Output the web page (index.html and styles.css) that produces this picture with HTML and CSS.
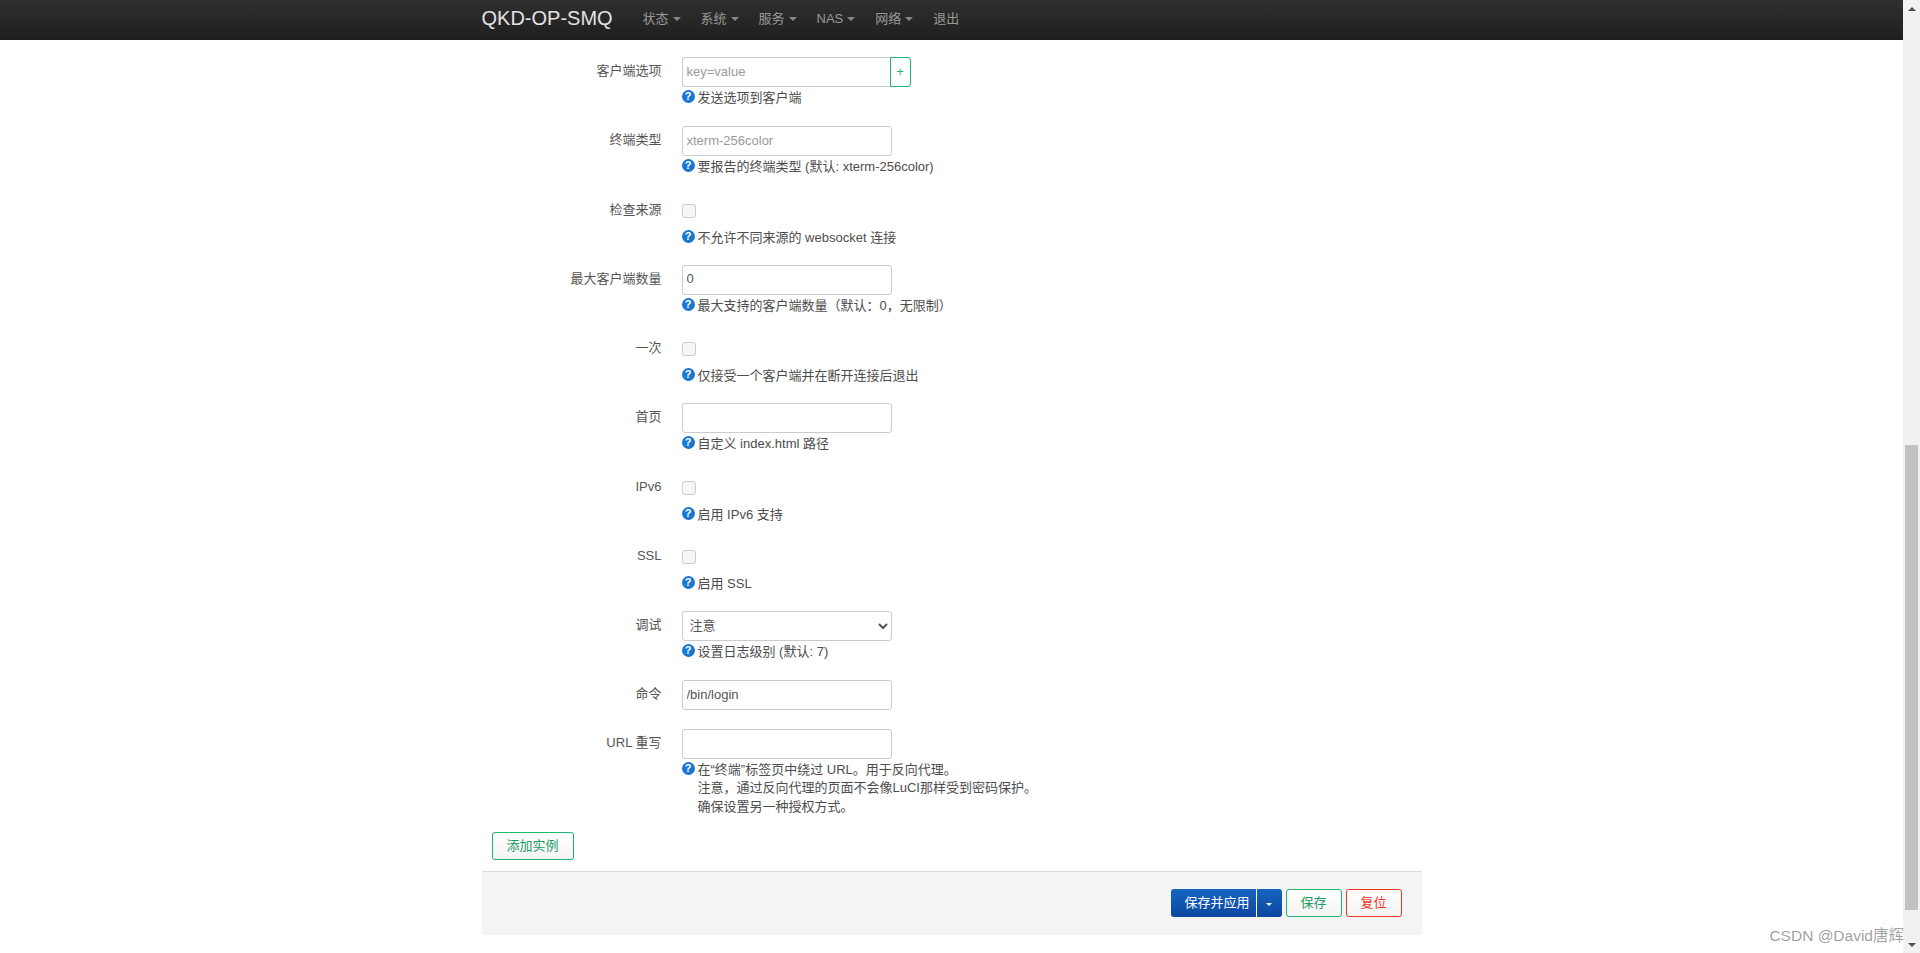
FILE: index.html
```html
<!DOCTYPE html>
<html lang="zh-CN">
<head>
<meta charset="utf-8">
<title>QKD-OP-SMQ</title>
<link rel="stylesheet" href="styles.css">
</head>
<body>
<div class="viewport">
  <div class="page">
    <header class="navbar">
      <div class="container nav-inner">
        <a class="brand">QKD-OP-SMQ</a>
        <nav class="nav">
          <a class="nav-link">状态<i class="caret"></i></a>
          <a class="nav-link">系统<i class="caret"></i></a>
          <a class="nav-link">服务<i class="caret"></i></a>
          <a class="nav-link">NAS<i class="caret"></i></a>
          <a class="nav-link">网络<i class="caret"></i></a>
          <a class="nav-link">退出</a>
        </nav>
      </div>
    </header>
    <main class="container content">
      <div class="row">
        <label class="label">客户端选项</label>
        <div class="field">
          <div class="input-group"><input class="input input-joined" placeholder="key=value"><button class="add-btn">+</button></div>
          <div class="help"><span class="help-icon">?</span>发送选项到客户端</div>
        </div>
      </div>
      <div class="row">
        <label class="label">终端类型</label>
        <div class="field">
          <input class="input" placeholder="xterm-256color">
          <div class="help"><span class="help-icon">?</span>要报告的终端类型 (默认: xterm-256color)</div>
        </div>
      </div>
      <div class="row row-check">
        <label class="label">检查来源</label>
        <div class="field">
          <div class="check-wrap"><input type="checkbox" class="check"></div>
          <div class="help"><span class="help-icon">?</span>不允许不同来源的 websocket 连接</div>
        </div>
      </div>
      <div class="row">
        <label class="label">最大客户端数量</label>
        <div class="field">
          <input class="input" value="0">
          <div class="help"><span class="help-icon">?</span>最大支持的客户端数量（默认：0，无限制）</div>
        </div>
      </div>
      <div class="row row-check">
        <label class="label">一次</label>
        <div class="field">
          <div class="check-wrap"><input type="checkbox" class="check"></div>
          <div class="help"><span class="help-icon">?</span>仅接受一个客户端并在断开连接后退出</div>
        </div>
      </div>
      <div class="row">
        <label class="label">首页</label>
        <div class="field">
          <input class="input">
          <div class="help"><span class="help-icon">?</span>自定义 index.html 路径</div>
        </div>
      </div>
      <div class="row row-check">
        <label class="label">IPv6</label>
        <div class="field">
          <div class="check-wrap"><input type="checkbox" class="check"></div>
          <div class="help"><span class="help-icon">?</span>启用 IPv6 支持</div>
        </div>
      </div>
      <div class="row row-check">
        <label class="label">SSL</label>
        <div class="field">
          <div class="check-wrap"><input type="checkbox" class="check"></div>
          <div class="help"><span class="help-icon">?</span>启用 SSL</div>
        </div>
      </div>
      <div class="row">
        <label class="label">调试</label>
        <div class="field">
          <select class="input select"><option>注意</option></select>
          <div class="help"><span class="help-icon">?</span>设置日志级别 (默认: 7)</div>
        </div>
      </div>
      <div class="row">
        <label class="label">命令</label>
        <div class="field">
          <input class="input" value="/bin/login">
        </div>
      </div>
      <div class="row row-last">
        <label class="label">URL 重写</label>
        <div class="field">
          <input class="input">
          <div class="help"><span class="help-icon">?</span>在“终端”标签页中绕过 URL。用于反向代理。<br>注意，通过反向代理的页面不会像LuCI那样受到密码保护。<br>确保设置另一种授权方式。</div>
        </div>
      </div>
      <div class="add-row"><button class="btn btn-green btn-add">添加实例</button></div>
      <div class="actions">
        <div class="split-btn"><button class="btn-blue btn-main">保存并应用</button><button class="btn-blue btn-drop"><i class="caret caret-white"></i></button></div>
        <button class="btn btn-green">保存</button>
        <button class="btn btn-red">复位</button>
      </div>
    </main>
  </div>
  <aside class="scrollbar">
    <div class="arrow-box"><i class="arrow-up"></i></div>
    <div class="track"><div class="thumb"></div></div>
    <div class="arrow-box"><i class="arrow-down"></i></div>
  </aside>
</div>
<div class="watermark">CSDN @David唐辉</div>
</body>
</html>
```
FILE: styles.css
```css
* { box-sizing: border-box; }
html, body { margin: 0; height: 100%; overflow: hidden; }
body {
  background: #fff;
  color: #555;
  font: 13px/18.57px "Liberation Sans", "Noto Sans CJK SC", sans-serif;
}
.viewport { display: flex; height: 953px; }
.page { flex: 1; min-width: 0; }
.container { width: 940px; margin: 0 auto; }

.navbar {
  height: 40px;
  background: linear-gradient(#2f2f2f, #1f1f1f);
}
.nav-inner { display: flex; align-items: center; height: 40px; }
.brand {
  color: #e2e2e2;
  font-size: 20px;
  width: 151px;
  padding-bottom: 4px;
}
.nav { display: flex; }
.nav-link {
  color: #999;
  padding: 0 10px 2px;
  display: flex;
  align-items: center;
  height: 40px;
}
.caret {
  display: inline-block;
  width: 0;
  height: 0;
  margin-left: 4px;
  border-left: 4px solid transparent;
  border-right: 4px solid transparent;
  border-top: 4px solid #888;
}
.caret-white { margin: 0; border-top-color: #fff; border-left-width: 3px; border-right-width: 3px; border-top-width: 3px; }

.content { padding-top: 17px; }
.row {
  display: grid;
  grid-template-columns: 180px 1fr;
  column-gap: 20px;
  padding-bottom: 18.25px;
}
.row-check { padding-bottom: 17.25px; }
.row-last { padding-bottom: 15.5px; }
.label { text-align: right; padding-top: 5px; color: #555; }
.input {
  display: block;
  width: 210px;
  height: 30px;
  padding: 3px 4px 5px;
  border: 1px solid #ccc;
  border-radius: 3px;
  background: #fff;
  color: #555;
  font: 13px "Liberation Sans", "Noto Sans CJK SC", sans-serif;
  outline: none;
}
.input::placeholder { color: #999; opacity: 1; }
.select { padding-left: 3px; }
.input-group { display: flex; }
.input-joined { border-radius: 3px 0 0 3px; border-right: 0; width: 208px; }
.add-btn {
  width: 21px;
  height: 30px;
  padding: 0 0 2px;
  border: 1px solid #1db56f;
  border-radius: 0 3px 3px 0;
  background: #fff;
  color: #1db56f;
  font: 13px "Liberation Sans", sans-serif;
}
.check-wrap { height: 31px; padding-top: 8px; }
.check {
  appearance: none;
  display: block;
  margin: 0;
  width: 14px;
  height: 14px;
  background: #f6f6f6;
  border: 1px solid #ccc;
  border-radius: 3px;
}
.help { margin-top: 2px; min-height: 19px; padding-left: 16px; position: relative; color: #4d4d4d; }
.help-icon {
  position: absolute;
  left: 0;
  top: 1px;
  width: 13px;
  height: 13px;
  border-radius: 50%;
  background: #1976d2;
  color: #fff;
  font: bold 11px/13px "Liberation Sans", sans-serif;
  text-align: center;
}

.add-row { padding: 0 10px 11px; }
.btn {
  height: 28px;
  width: 56px;
  padding: 0 0 2px;
  border-radius: 3px;
  background: linear-gradient(#fff, #f4f4f4);
  font: 13px "Liberation Sans", "Noto Sans CJK SC", sans-serif;
}
.btn-add { width: 82px; }
.btn-green { border: 1px solid #1db56f; color: #1c9c62; }
.btn-red { border: 1px solid #f0341e; color: #f0341e; }
.actions {
  display: flex;
  justify-content: flex-end;
  gap: 4px;
  height: 64px;
  padding: 17px 20px 0;
  background: #f4f4f4;
  border-top: 1px solid #ddd;
  border-radius: 0 0 3px 3px;
}
.split-btn { display: flex; height: 28px; }
.btn-blue {
  border: 0;
  padding: 0 0 2px;
  height: 28px;
  background: linear-gradient(#1565c0, #0d47a1);
  color: #fff;
  font: 13px "Liberation Sans", "Noto Sans CJK SC", sans-serif;
}
.btn-main { width: 86px; padding: 0 6px 2px 14px; border-radius: 3px 0 0 3px; border-right: 1px solid #fff; white-space: nowrap; }
.btn-drop { width: 25px; border-radius: 0 3px 3px 0; }

.scrollbar {
  width: 17px;
  flex: none;
  background: #f1f1f1;
  display: flex;
  flex-direction: column;
}
.arrow-box { height: 17px; display: flex; align-items: center; justify-content: center; flex: none; }
.arrow-up, .arrow-down { width: 0; height: 0; border-left: 4px solid transparent; border-right: 4px solid transparent; }
.arrow-up { border-bottom: 4px solid #505050; }
.arrow-down { border-top: 4px solid #505050; }
.track { flex: 1; display: flex; flex-direction: column; justify-content: flex-end; padding: 0 2px 26px; }
.thumb { height: 465px; background: #c1c1c1; }

.watermark {
  position: absolute;
  right: 16px;
  bottom: 7px;
  color: rgba(0,0,0,0.4);
  font: 15.5px/20px "Liberation Sans", "Noto Sans CJK SC", sans-serif;
  background: rgba(255,255,255,0.6);
}
```
